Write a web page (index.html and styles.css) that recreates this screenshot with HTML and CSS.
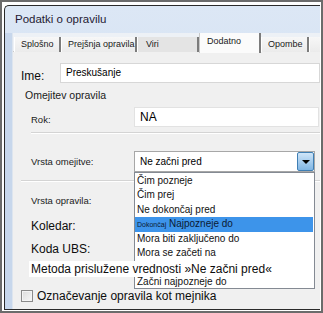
FILE: index.html
```
<!DOCTYPE html>
<html lang="sl">
  <head>
    <meta charset="UTF-8" />
    <title>Podatki o opravilu</title>
    <link rel="stylesheet" href="styles.css">
  </head>
  <body>
    <div class="frame">
      <div class="window">
        <div class="titlebar">Podatki o opravilu</div>
        <div class="body">
          <div class="stripe"></div>
          <div class="main">
            <div class="tabs">
              <div class="tab">Splošno</div>
              <div class="tab">Prejšnja opravila</div>
              <div class="tab tab-dim">Viri</div>
              <div class="tab tab-active">Dodatno</div>
              <div class="tab">Opombe</div>
              <div class="tab tab-cut"></div>
            </div>
            <div class="panel">
              <div class="row row-ime">
                <span class="lbl-big lbl-ime">Ime:</span>
                <div class="field">Preskušanje</div>
              </div>
              <div class="group-title">Omejitev opravila</div>
              <div class="row row-rok">
                <span class="lbl lbl-rok">Rok:</span>
                <div class="field field-na">NA</div>
              </div>
              <div class="sep sep-inner"></div>
              <div class="row row-vrsta">
                <span class="lbl lbl-vrsta">Vrsta omejitve:</span>
                <div class="combo">
                  <span class="combo-text">Ne začni pred</span>
                  <span class="combo-btn"><span class="arrow"></span></span>
                  <ul class="list">
                    <li>Čim pozneje</li>
                    <li>Čim prej</li>
                    <li>Ne dokončaj pred</li>
                    <li class="selected"><small>Dokončaj</small> Najpozneje do</li>
                    <li>Mora biti zaključeno do</li>
                    <li>Mora se začeti na</li>
                    <li>Mora se končati na</li>
                    <li>Začni najpozneje do</li>
                  </ul>
                </div>
              </div>
              <div class="sep sep-outer"></div>
              <div class="lbl lbl-opravila">Vrsta opravila:</div>
              <div class="lbl-big lbl-koledar">Koledar:</div>
              <div class="lbl-big lbl-ubs">Koda UBS:</div>
              <div class="lbl-big lbl-metoda">Metoda prislužene vrednosti »Ne začni pred«</div>
              <label class="check">
                <span class="box"></span>
                <span>Označevanje opravila kot mejnika</span>
              </label>
            </div>
          </div>
        </div>
      </div>
    </div>
  </body>
</html>
```

FILE: styles.css
```
* {
  margin: 0;
  padding: 0;
  box-sizing: border-box;
}

body {
  font-family: "Liberation Sans", Arial, sans-serif;
  background-color: #ffffff;
  color: #000000;
}

.frame {
  width: 323px;
  height: 313px;
  border: 2px solid #6b6b6b;
  padding: 3px 1px 1px 2px;
  background-color: #ffffff;
  display: flex;
  flex-direction: column;
  overflow: hidden;
}

.window {
  flex: 1;
  display: flex;
  flex-direction: column;
  border: 1px solid #2a2a2a;
  border-right: none;
  border-radius: 5px 0 0 0;
  background: linear-gradient(#dce7f5, #c8d9ee);
  overflow: hidden;
}

.titlebar {
  height: 27px;
  padding: 7px 0 0 10px;
  font-size: 11.5px;
  color: #1f1a33;
}

.body {
  flex: 1;
  display: flex;
  min-width: 0;
}

.stripe {
  flex: none;
  width: 7px;
  background: #c7d7ec;
}

.main {
  flex: 1;
  min-width: 0;
  display: flex;
  flex-direction: column;
  background-color: #f0f0f0;
  border-left: 1px solid #dde5ef;
}

/* tabs */
.tabs {
  height: 19px;
  display: grid;
  grid-template-columns: 47px 76px 62px 62px 48px 20px;
  align-items: end;
  padding-left: 1px;
  background-color: #edf1f6;
  border-bottom: 1px solid #c9c9c9;
}

.tab {
  height: 15px;
  font-size: 9px;
  line-height: 14px;
  padding-left: 6px;
  color: #1a1a1a;
  background: linear-gradient(#f7f7f7, #ebebeb);
  border-left: 1px solid #ffffff;
  border-right: 2px solid #7c7c7c;
  white-space: nowrap;
  overflow: hidden;
}

.tab-dim {
  padding-left: 8px;
  background: #e4e4e4;
}

.tab-active {
  height: 20px;
  margin-bottom: -1px;
  line-height: 17px;
  padding-left: 7px;
  background: #fbfbfb;
  border-left: 1px solid #c9c9c9;
  border-right: 2px solid #7c7c7c;
}

.tab-cut {
  border-right: none;
}

/* panel */
.panel {
  flex: 1;
  display: flex;
  flex-direction: column;
  align-items: flex-start;
  padding: 11px 0 0 8px;
}

.row {
  display: flex;
  align-self: stretch;
}

.lbl {
  flex: none;
  font-size: 9.5px;
  line-height: 12px;
  color: #1b1b1b;
}

.lbl-big {
  flex: none;
  font-size: 12px;
  line-height: 16px;
  color: #0d0d0d;
}

.field {
  flex: 1;
  min-width: 0;
  height: 20px;
  background-color: #ffffff;
  border: 1px solid #d7d7d7;
  font-size: 10px;
  line-height: 18px;
  padding-left: 5px;
}

.row-ime {
  height: 20px;
}

.lbl-ime {
  width: 39px;
  align-self: flex-end;
  line-height: 14px;
}

.group-title {
  margin: 4px 0 0 4px;
  height: 16px;
  font-size: 10.5px;
  line-height: 16px;
  color: #1a1a1a;
}

.row-rok {
  margin-top: 4px;
  padding-left: 10px;
}

.lbl-rok {
  width: 103px;
  align-self: flex-end;
  padding-bottom: 1px;
}

.field-na {
  font-size: 12px;
  line-height: 18px;
  border-color: #e2e2e2;
  margin-right: 1px;
}

.sep {
  height: 2px;
  border-top: 1px solid #d4d4d4;
  border-bottom: 1px solid #ffffff;
  align-self: stretch;
}

.sep-inner {
  margin: 5px 0 0 10px;
}

.sep-outer {
  margin-top: 8px;
}

.row-vrsta {
  margin-top: 17px;
  padding-left: 10px;
  align-items: center;
}

.lbl-vrsta {
  width: 103px;
}

/* combo */
.combo {
  position: relative;
  flex: none;
  width: 181px;
  height: 21px;
  display: flex;
  align-items: center;
  background-color: #ffffff;
  border: 1px solid #a7a7a7;
}

.combo-text {
  flex: 1;
  font-size: 10px;
  padding-left: 5px;
}

.combo-btn {
  width: 17px;
  height: 19px;
  display: flex;
  align-items: center;
  justify-content: center;
  background: linear-gradient(#cfe5f8, #7fb5e3);
  border: 1px solid #3f7fb4;
  border-radius: 2px;
}

.arrow {
  width: 0;
  height: 0;
  border-left: 4px solid transparent;
  border-right: 4px solid transparent;
  border-top: 4px solid #000000;
}

.list {
  position: absolute;
  top: 20px;
  left: -1px;
  width: 181px;
  height: 117px;
  z-index: 1;
  list-style: none;
  padding-top: 1px;
  background-color: #ffffff;
  border: 1px solid #848a93;
  font-size: 10px;
  color: #111111;
}

.list li {
  height: 14.4px;
  line-height: 14.4px;
  padding-left: 2px;
  white-space: nowrap;
}

.list .selected {
  background-color: #3d94ea;
  margin-right: 1px;
  color: #0c1a33;
}

.list small {
  font-size: 7px;
}

/* labels below */
.lbl-opravila {
  margin: 13px 0 0 10px;
}

.lbl-koledar {
  margin: 11px 0 0 10px;
}

.lbl-ubs {
  margin: 7px 0 0 10px;
}

.lbl-metoda {
  position: relative;
  z-index: 2;
  margin: 4px 0 0 8px;
  padding: 0 2px;
  background-color: #ffffff;
  white-space: nowrap;
}

.check {
  margin-top: 12px;
  display: flex;
  align-items: center;
  gap: 4px;
  font-size: 12px;
  line-height: 14px;
  color: #0d0d0d;
}

.box {
  width: 12px;
  height: 12px;
  border: 1px solid #8a8a8a;
  background: linear-gradient(135deg, #dcdcdc, #f8f8f8);
  box-shadow: inset 0 0 0 1px #f4f4f4;
}
```
